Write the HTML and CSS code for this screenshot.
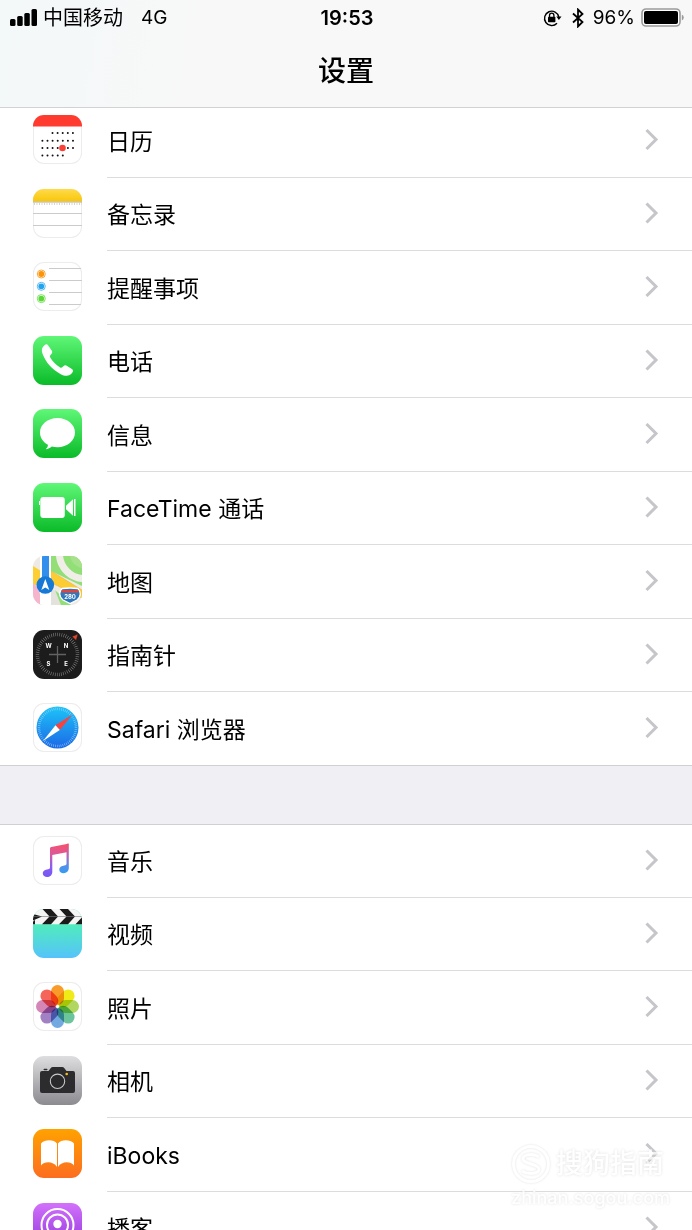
FILE: index.html
```html
<!DOCTYPE html>
<html lang="zh-CN">
<head>
<meta charset="utf-8">
<meta name="viewport" content="width=device-width, initial-scale=1">
<title>设置</title>
<link rel="stylesheet" href="styles.css">
</head>
<body>
<header class="top">
  <div class="status">
    <div class="status-left">
      <svg class="signal" width="27" height="17" viewBox="0 0 27 17"><rect x="0" y="10" width="5.500" height="7" rx="1.500"/><rect x="7.200" y="7" width="5.500" height="10" rx="1.500"/><rect x="14.300" y="4" width="5.500" height="13" rx="1.500"/><rect x="21.500" y="0" width="5.500" height="17" rx="1.500"/></svg>
      <span class="carrier">中国移动</span>
      <span class="network">4G</span>
    </div>
    <time class="clock">19:53</time>
    <div class="status-right">
      <svg width="20" height="18" viewBox="0 0 20 18"><path d="M14 14.300A7.200 7.200 0 1 1 15.800 8" fill="none" stroke="#000" stroke-width="1.400"/><path d="M13.300 7.400h5.200l-2.600 3.600z"/><rect x="5" y="7.800" width="7.400" height="5.400" rx=".8"/><path d="M6.500 8V6.400a2.200 2.200 0 0 1 4.400 0V8" fill="none" stroke="#000" stroke-width="1.300"/></svg>
      <svg class="bluetooth" width="12" height="20" viewBox="0 0 12 20"><path d="M1 5.500l9.500 8.500L6 18.500v-17L10.500 6 1 14.500" fill="none" stroke="#000" stroke-width="1.800"/></svg>
      <span class="percent">96%</span>
      <svg width="43" height="19" viewBox="0 0 43 19"><rect x="1" y="1" width="38" height="17" rx="4" fill="#fff" stroke="#9b9b9b" stroke-width="1.600"/><rect x="3" y="3" width="34" height="13" rx="2"/><path d="M40.800 6.500q2 .8 2 3t-2 3z" fill="#9b9b9b"/></svg>
    </div>
  </div>
  <h1 class="title">设置</h1>
</header>

<svg class="defs" width="0" height="0" aria-hidden="true">
  <defs>
    <linearGradient id="green" x1="0" y1="0" x2="0" y2="1"><stop offset="0" stop-color="#5ff777"/><stop offset="1" stop-color="#0abb28"/></linearGradient>
    <linearGradient id="yellow" x1="0" y1="0" x2="0" y2="1"><stop offset="0" stop-color="#fedb4a"/><stop offset="1" stop-color="#f8c60a"/></linearGradient>
    <linearGradient id="blue" x1="0" y1="0" x2="0" y2="1"><stop offset="0" stop-color="#1cc4f8"/><stop offset="1" stop-color="#1d68e6"/></linearGradient>
    <linearGradient id="music" gradientUnits="userSpaceOnUse" x1="28" y1="8" x2="22" y2="41"><stop offset="0" stop-color="#f8516b"/><stop offset=".35" stop-color="#d9599c"/><stop offset=".7" stop-color="#8b5df0"/><stop offset="1" stop-color="#7658f5"/></linearGradient>
    <linearGradient id="music2" gradientUnits="userSpaceOnUse" x1="32" y1="8" x2="32" y2="38"><stop offset="0" stop-color="#f0506c"/><stop offset=".4" stop-color="#b368bd"/><stop offset=".75" stop-color="#548fec"/><stop offset="1" stop-color="#2c9ff2"/></linearGradient>
    <linearGradient id="teal" x1="0" y1="0.300" x2="0" y2="1"><stop offset="0" stop-color="#50edbb"/><stop offset="1" stop-color="#55c3fb"/></linearGradient>
    <linearGradient id="silver" x1="0" y1="0" x2="0" y2="1"><stop offset="0" stop-color="#dedee0"/><stop offset="1" stop-color="#8b8b90"/></linearGradient>
    <linearGradient id="orange" x1="0" y1="0" x2="0" y2="1"><stop offset="0" stop-color="#ffa200"/><stop offset="1" stop-color="#fc6d20"/></linearGradient>
    <linearGradient id="purple" x1="0" y1="0" x2="0" y2="1"><stop offset="0" stop-color="#d271fb"/><stop offset="1" stop-color="#8b31d8"/></linearGradient>
    <symbol id="chevron" viewBox="0 0 14 22"><path d="M1.500 1.500l9.500 9.500-9.500 9.500" fill="none" stroke="#c5c5ca" stroke-width="3"/></symbol>
  </defs>
</svg>

<main class="content">
  <ul class="group group-apps">
    <li><a class="row" href="#calendar">
      <svg class="icon icon-light" viewBox="0 0 49 49"><path d="M0 0h49v11.500H0z" fill="#ff3b30"/><g fill="none" stroke="#111" stroke-width="2" stroke-linecap="round" stroke-dasharray="0 5.100"><path d="M19.500 18H41M9.400 25.700H41M9.400 33H41M9.400 40.500H31"/></g><circle cx="29.500" cy="33" r="3.300" fill="#f9413a"/></svg>
      <span class="label">日历</span><svg class="chevron"><use href="#chevron"/></svg></a></li>
    <li><a class="row" href="#notes">
      <svg class="icon icon-light" viewBox="0 0 49 49"><path d="M0 0h49v12.500H0z" fill="url(#yellow)"/><path d="M0 13h49" stroke="#b9a878"/><path d="M1 15h48" stroke="#aaa" stroke-width="1.200" stroke-dasharray="1 1.500"/><path d="M0 24.500h49M0 36.500h49" stroke="#cbcbcb"/></svg>
      <span class="label">备忘录</span><svg class="chevron"><use href="#chevron"/></svg></a></li>
    <li><a class="row" href="#reminders">
      <svg class="icon icon-light" viewBox="0 0 49 49"><path d="M16 6.500h33M16 18.500h33M16 30.500h33M16 42.500h33" stroke="#cbcbcb"/><g fill="#fff" stroke-width="1"><circle cx="8.300" cy="12" r="4" stroke="#fba63b"/><circle cx="8.300" cy="24.300" r="4" stroke="#57b9f4"/><circle cx="8.300" cy="36.600" r="4" stroke="#7be05f"/></g><circle cx="8.300" cy="12" r="2.900" fill="#fb9409"/><circle cx="8.300" cy="24.300" r="2.900" fill="#20a4ee"/><circle cx="8.300" cy="36.600" r="2.900" fill="#5ad835"/></svg>
      <span class="label">提醒事项</span><svg class="chevron"><use href="#chevron"/></svg></a></li>
    <li><a class="row" href="#phone">
      <svg class="icon" viewBox="0 0 49 49"><path d="M0 0h49v49H0z" fill="url(#green)"/><path d="M11.500 9.200c1.400-1.200 2.700-1.200 3.700.2l3.500 5.200c.9 1.400.6 2.600-.5 3.600-1.500 1.300-1.700 2-.8 3.500 2.200 3.700 5.600 7 9.400 9.500 1.300.9 2.200.7 3.300-.6 1.300-1.500 2.500-1.700 4-.7l4.800 3.200c1.400 1 1.400 2.200.5 3.500-2.700 3.800-6.900 4.200-11.600 1.600C19.200 33.500 12.800 26.500 9.600 18c-1.400-3.700-.9-6.700 1.900-8.800z" fill="#fff"/></svg>
      <span class="label">电话</span><svg class="chevron"><use href="#chevron"/></svg></a></li>
    <li><a class="row" href="#messages">
      <svg class="icon" viewBox="0 0 49 49"><path d="M0 0h49v49H0z" fill="url(#green)"/><path d="M24.500 9C34.300 9 42 15.400 42 23.600s-7.700 14.700-17.500 14.700c-2 0-3.900-.3-5.700-.8-1.600 1.500-3.700 2.600-6 2.700 1.500-1.400 2.300-2.900 2.100-4.400C10 33.200 7 28.800 7 23.600 7 15.400 14.700 9 24.500 9z" fill="#fff"/></svg>
      <span class="label">信息</span><svg class="chevron"><use href="#chevron"/></svg></a></li>
    <li><a class="row" href="#facetime">
      <svg class="icon" viewBox="0 0 49 49"><path d="M0 0h49v49H0z" fill="url(#green)"/><rect x="7.300" y="14" width="24.500" height="21" rx="3" fill="#fff"/><path d="M33 22.700l7-6.500v16.600l-7-6.500zM41 16h1.500v17H41z" fill="#fff"/><path d="M6.500 18v4" stroke="#fff"/></svg>
      <span class="label">FaceTime 通话</span><svg class="chevron"><use href="#chevron"/></svg></a></li>
    <li><a class="row" href="#maps">
      <svg class="icon" viewBox="0 0 49 49"><path d="M0 0h49v49H0z" fill="#eeebe6"/><path d="M18 0h31v30L18 15z" fill="#92df78"/><path d="M23 0c1 13 12 25 26 26v-7C39 18 31 9 30 0z" fill="#f1eee8"/><path d="M37 0c1 6 6 11 12 12V0z" fill="#a7e18c"/><path d="M0 10l8 5v14H0z" fill="#fdcf32"/><path d="M18 15l31 19v8L17 26z" fill="#fccd32" stroke="#e9b13f" stroke-width=".6"/><path d="M0 27c6 4 8 12 8 22H0z" fill="#f5b5cb"/><path d="M17 30l18 19H17z" fill="#e4e2dc"/><path d="M22 34l16 15H28z" fill="#92df78"/><path d="M7 0h11v49H7z" fill="#fff"/><path d="M9 0h7v22H9z" fill="#3290ec"/><circle cx="12.300" cy="29" r="8.800" fill="#1679d5"/><path d="M12.300 23l4 11-4-2.500-4 2.500z" fill="#fff"/><path d="M29 32.500q8-1 16 0 5 6.500-1 11.500l-7 3.500-7-3.500q-6-5-1-11.500z" fill="#2f78bd" stroke="#fff" stroke-width="1.300"/><path d="M28.500 34h17v2.500h-17z" fill="#dc4540"/><text class="shield" x="37" y="43" text-anchor="middle">280</text></svg>
      <span class="label">地图</span><svg class="chevron"><use href="#chevron"/></svg></a></li>
    <li><a class="row" href="#compass">
      <svg class="icon" viewBox="0 0 49 49"><path d="M0 0h49v49H0z" fill="#1c1c1d"/><circle cx="24.500" cy="24.500" r="20" fill="none" stroke="#999" stroke-width="3.500" stroke-dasharray=".6 2" pathLength="156"/><path d="M24.500 16v17M16 24.500h17" stroke="#626262" stroke-width="1.300"/><path d="M39 6.500l6-2.500-1.800 6.500z" fill="#e5452e" stroke="#1c1c1d" stroke-width=".5"/><g class="points" text-anchor="middle"><text x="15.500" y="17.500">W</text><text x="33" y="17.500">N</text><text x="15.500" y="36">S</text><text x="33" y="36">E</text></g></svg>
      <span class="label">指南针</span><svg class="chevron"><use href="#chevron"/></svg></a></li>
    <li><a class="row" href="#safari">
      <svg class="icon icon-light" viewBox="0 0 49 49"><circle cx="24.500" cy="24.500" r="21" fill="url(#blue)"/><circle cx="24.500" cy="24.500" r="18.500" fill="none" stroke="#a5d8f8" stroke-width="2.500" stroke-dasharray=".5 1.500" pathLength="120"/><path d="M39.500 11.500L26.800 27l-4.300-4.800z" fill="#f8423e"/><path d="M10 38l12.500-15.800 4.300 4.800z" fill="#fff"/></svg>
      <span class="label">Safari 浏览器</span><svg class="chevron"><use href="#chevron"/></svg></a></li>
  </ul>
  <ul class="group group-media">
    <li><a class="row" href="#music">
      <svg class="icon icon-light" viewBox="0 0 49 49"><path d="M17 12.500Q17 11.200 18.300 10.900L35 7.700V16L19.300 19V36c0 3-2.500 5-5.200 5-2.300 0-4.300-1.300-4.300-3.500 0-3 2.500-4 5.200-4.300 1.700-.2 2-.6 2-2.200z" fill="url(#music)"/><path d="M33.500 8l2.300-.4V32c0 3-2.300 5.200-5.200 5.200-2.400 0-4.300-1.400-4.300-3.500 0-3 2.500-4 5-4.300 1.900-.2 2.200-.6 2.200-2.200z" fill="url(#music2)"/></svg>
      <span class="label">音乐</span><svg class="chevron"><use href="#chevron"/></svg></a></li>
    <li><a class="row" href="#videos">
      <svg class="icon" viewBox="0 0 49 49"><path d="M0 0h49v49H0z" fill="url(#teal)"/><path d="M0 0h49v15.300H0z" fill="#f5f5f5"/><path d="M0 5l9 2.500-9 4zM9.500 0h8.500l7 7.500-7 7.800H9l7.500-7.800zM26.500 0H35l7 7.500-7 7.800h-9l7.500-7.800zM43 0h6v5.500zM42.500 15.300l6.500-7v7zM0 15.300v-2.500l2-2v4.500z" fill="#1b1b1b"/><path d="M0 7.500h49" stroke="#777" stroke-width=".6"/></svg>
      <span class="label">视频</span><svg class="chevron"><use href="#chevron"/></svg></a></li>
    <li><a class="row" href="#photos">
      <svg class="icon icon-light petals" viewBox="0 0 49 49"><g><rect x="18" y="3" width="13" height="20" rx="6.500" fill="#f99b2b"/><rect x="18" y="3" width="13" height="20" rx="6.500" fill="#f0ea18" transform="rotate(45 24.500 24.500)"/><rect x="18" y="3" width="13" height="20" rx="6.500" fill="#b1d760" transform="rotate(90 24.500 24.500)"/><rect x="18" y="3" width="13" height="20" rx="6.500" fill="#6bc49c" transform="rotate(135 24.500 24.500)"/><rect x="18" y="3" width="13" height="20" rx="6.500" fill="#72a9e0" transform="rotate(180 24.500 24.500)"/><rect x="18" y="3" width="13" height="20" rx="6.500" fill="#a180c3" transform="rotate(225 24.500 24.500)"/><rect x="18" y="3" width="13" height="20" rx="6.500" fill="#d486b6" transform="rotate(270 24.500 24.500)"/><rect x="18" y="3" width="13" height="20" rx="6.500" fill="#f5655a" transform="rotate(315 24.500 24.500)"/></g></svg>
      <span class="label">照片</span><svg class="chevron"><use href="#chevron"/></svg></a></li>
    <li><a class="row" href="#camera">
      <svg class="icon" viewBox="0 0 49 49"><path d="M0 0h49v49H0z" fill="url(#silver)"/><path d="M9 15h6.500l2.300-3q.8-1 2-1h9.400q1.200 0 2 1l2.300 3H40q2 0 2 2v18q0 2-2 2H9q-2 0-2-2V17q0-2 2-2z" fill="#2c2c2e"/><rect x="10.500" y="12.800" width="4" height="1.500" rx=".7" fill="#2c2c2e"/><circle cx="24.500" cy="25.300" r="7.200" fill="#2a2a2c" stroke="#c9c9cb" stroke-width="1.100"/><circle cx="33.700" cy="18" r="1.300" fill="#f7bd19"/></svg>
      <span class="label">相机</span><svg class="chevron"><use href="#chevron"/></svg></a></li>
    <li><a class="row" href="#ibooks">
      <svg class="icon" viewBox="0 0 49 49"><path d="M0 0h49v49H0z" fill="url(#orange)"/><path d="M8 14.500c3.500-4 12.500-4.500 16 0V38c-3.500-5.800-12.500-6-16-1.500zM25 14.500c3.500-4.500 12.500-4 16 0v22c-3.500-4.500-12.500-4.300-16 1.500z" fill="#fff"/></svg>
      <span class="label">iBooks</span><svg class="chevron"><use href="#chevron"/></svg></a></li>
    <li><a class="row" href="#podcasts">
      <svg class="icon" viewBox="0 0 49 49"><path d="M0 0h49v49H0z" fill="url(#purple)"/><g fill="none" stroke="#fff" stroke-width="2"><circle cx="24.500" cy="22" r="16"/><circle cx="24.500" cy="22" r="10.500"/></g><circle cx="24.500" cy="21" r="4.200" fill="#fff"/><rect x="21" y="27" width="7" height="14" rx="3" fill="#fff"/></svg>
      <span class="label">播客</span><svg class="chevron"><use href="#chevron"/></svg></a></li>
  </ul>
</main>

<div class="watermark">
  <div class="brand"><svg width="40" height="40" viewBox="0 0 40 40"><g fill="none" stroke="#fff" stroke-width="3"><circle cx="20" cy="20" r="17.500"/><path d="M28 13c-5-4-16-3-16 2s16 5 16 10-11 6-17 2"/></g></svg><span class="brand-name">搜狗指南</span></div>
  <div class="brand-url">zhinan.sogou.com</div>
</div>
</body>
</html>
```
FILE: styles.css
```css
* {
  box-sizing: border-box;
}

body {
  position: relative;
  height: 100vh;
  margin: 0;
  overflow: hidden;
  background: #fff;
  color: #000;
  font-family: Inter, "Noto Sans CJK SC", sans-serif;
}

.top {
  position: relative;
  z-index: 1;
  height: 108px;
  border-bottom: 1px solid #d2d2d4;
  background: linear-gradient(100deg, #f3f8f9, #f8f8f8 30%);
}

.status {
  display: grid;
  grid-template-columns: 1fr auto 1fr;
  align-items: center;
  height: 35px;
  padding: 0 8px 0 10px;
  font-size: 19px;
  line-height: 24px;
}

.status-left,
.status-right {
  display: flex;
  align-items: center;
}

.status-left {
  gap: 6px;
}

.status-right {
  justify-content: flex-end;
  gap: 6px;
}

.carrier {
  font-size: 20px;
}

.network {
  margin-left: 12px;
}

.clock {
  font-size: 20px;
  font-weight: 600;
}

.bluetooth {
  margin: 0 3px;
}

.title {
  margin: 16px 0 0;
  font-size: 28px;
  font-weight: 500;
  line-height: 40px;
  text-align: center;
}

.defs {
  position: absolute;
}

.content {
  margin-top: -4px;
  background: #efeff4;
}

.group {
  margin: 0;
  padding: 0;
  list-style: none;
  background: #fff;
}

.group-apps {
  border-bottom: 1px solid #d0d0d4;
}

.group-media {
  margin-top: 58px;
  border-top: 1px solid #d0d0d4;
}

.row {
  display: flex;
  align-items: center;
  height: 74px;
  padding-left: 33px;
  color: inherit;
  text-decoration: none;
}

li:nth-child(even) .row,
.group-media li:first-child .row,
.group-apps li:last-child .row {
  height: 73px;
}

.icon {
  flex: none;
  width: 49px;
  height: 49px;
  margin: 0 25px 3px 0;
  border-radius: 11px;
}

.icon-light {
  background: #fff;
  box-shadow: inset 0 0 0 1px #ececec;
}

.label {
  display: flex;
  flex: 1;
  align-items: center;
  align-self: stretch;
  padding-top: 2px;
  border-bottom: 1px solid #dcdcde;
  font-size: 23px;
  line-height: 32px;
  white-space: pre;
}

.chevron {
  box-sizing: content-box;
  align-self: stretch;
  width: 14px;
  height: auto;
  padding: 0 33px 2px 0;
  border-bottom: 1px solid #dcdcde;
}

.group-apps li:last-child .label,
.group-apps li:last-child .chevron {
  border-bottom: 0;
}

.petals g {
  isolation: isolate;
}

.petals rect {
  mix-blend-mode: multiply;
}

.shield,
.points {
  fill: #fff;
  font-size: 6px;
  font-weight: 700;
}

.watermark {
  position: absolute;
  right: 22px;
  bottom: 22px;
  z-index: 2;
  color: #fff;
  font-weight: 500;
  text-shadow: 0 0 3px #d4d4d4;
  opacity: .75;
  pointer-events: none;
}

.brand {
  display: flex;
  align-items: center;
  gap: 5px;
}

.brand svg {
  filter: drop-shadow(0 0 1px #d8d8d8);
}

.brand-name {
  font-size: 27px;
  line-height: 48px;
}

.brand-url {
  font-size: 18px;
  line-height: 20px;
}
```
